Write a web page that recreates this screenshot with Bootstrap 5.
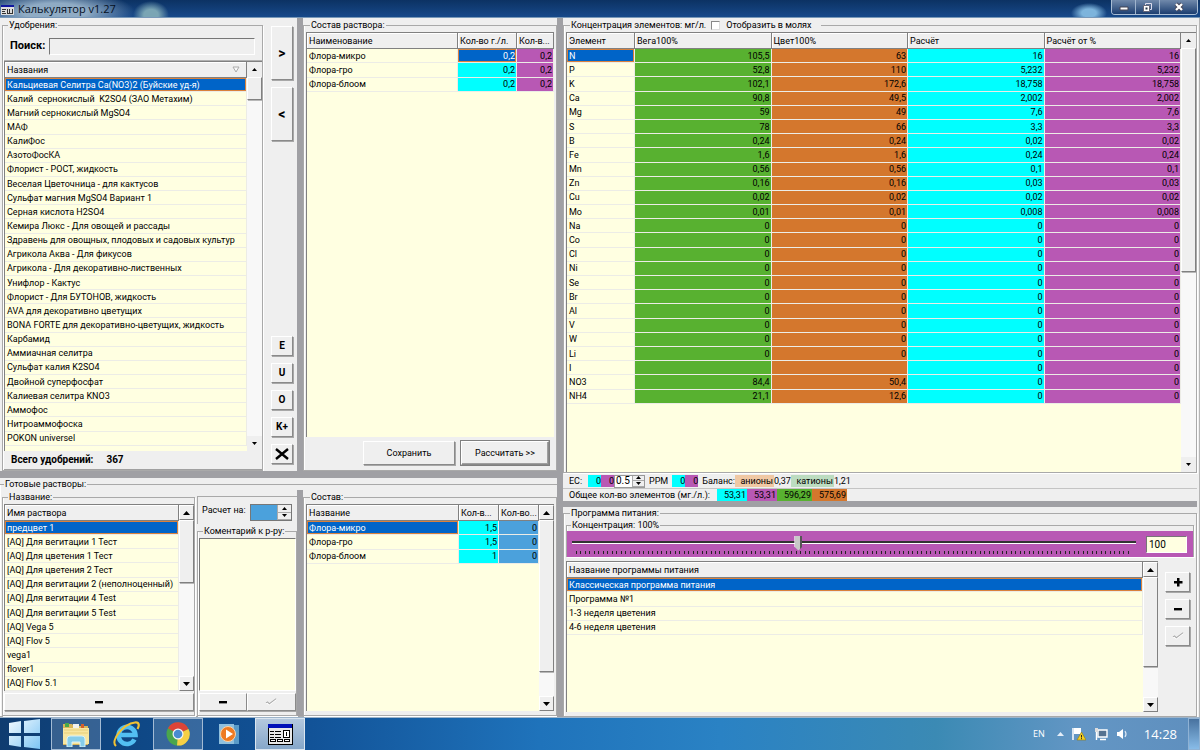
<!DOCTYPE html>
<html lang="ru">
<head>
<meta charset="utf-8">
<meta name="viewport" content="width=device-width, initial-scale=1">
<title>Калькулятор v1.27</title>
<link href="https://cdn.jsdelivr.net/npm/bootstrap@5.3.0/dist/css/bootstrap.min.css" rel="stylesheet">
<style>
  :root { --face:#efefef; --cream:#ffffe1; --cyan:#00ffff; --violet:#b858b4; --green:#58b130; --orange:#d4772d; --sky:#4ba1dc; --pick:#0064c8; --split:#a0a0a4; --edge:#808080; }
  body { background:var(--face); color:#000; font-family:Roboto,"Liberation Sans",sans-serif; font-size:9px; line-height:12px; }
  .titlebar { height:18px; padding-left:1px; font:11px/18px "Open Sans",sans-serif; border-bottom:1px solid #7898b8;
    background:radial-gradient(ellipse 18px 10px at 1089px 13px,#7db4dc 40%,transparent),radial-gradient(ellipse 18px 14px at 151px 15px,#7aa5b4 40%,transparent),radial-gradient(ellipse 80px 22px at 55px 12px,#8fabc4 40%,transparent),linear-gradient(#0c3263,#17498a); }
  .titlebar .caption { color:#05101f; }
  .winbtns { border:1px solid #a9bdd4; border-top:0; border-radius:0 0 4px 4px; height:15px; margin-right:2px; overflow:hidden; }
  .winbtns button { width:24px; height:14px; border:0; border-right:1px solid #9fb4cd; background:linear-gradient(#7089ab,#1c3e70); padding:0; line-height:0; }
  .winbtns button:last-child { width:37px; border-right:0; }

  .panes { display:grid; grid-template-columns:minmax(0,297fr) 6px minmax(0,254fr) 6px minmax(0,637fr); }
  .left-side { grid-column:1 / 4; display:grid; grid-template-rows:453fr 7px 239fr; }
  .row-top, .row-bottom { display:grid; grid-template-columns:minmax(0,297fr) 6px minmax(0,254fr); }
  .ready { display:grid; grid-template-columns:minmax(0,195fr) minmax(0,102fr); }
  .right-side { display:grid; grid-template-rows:483fr 6px 210fr; padding-right:2px; border-right:1px solid #b5b5b5; }
  .splitter { background:var(--split); }

  fieldset.gbox { border:1px solid #a9a9a9; box-shadow:inset 1px 0 #fff, 1px 1px #fff; display:flex; flex-direction:column; min-width:0; padding:0 2px; }
  fieldset.gbox > legend { float:none; width:auto; margin:0 0 0 4px; padding:0 1px; font-size:9px; line-height:14px; background:var(--face); }
  fieldset.tight > legend { line-height:12px; }
  fieldset.edge { margin-left:2px; padding:0 0 0 1px; }

  .frame { display:flex; flex:1 1 0; min-height:0; background:var(--cream); border:solid var(--edge); border-width:1px 0 0 1px; overflow:hidden; }
  .frame > .sheet { flex:1 1 0; min-width:0; }
  table.gridtab { width:100%; table-layout:fixed; border-collapse:separate; border-spacing:0; }
  .gridtab thead { height:16px; }
  .gridtab th { height:16px; padding:0 2px; font-weight:400; background:var(--face); border:solid var(--edge); border-width:0 1px 1px 0; box-shadow:inset 1px 1px #fff; white-space:nowrap; overflow:hidden; }
  .gridtab td { padding:0 1px 0 2px; line-height:12px; white-space:nowrap; overflow:hidden; border:solid #ecece6; border-width:0 1px 1px 0; }
  .gridtab td + td { text-align:right; }
  .gridtab td.picked { background:var(--pick); color:#fff; box-shadow:inset 0 0 0 1px #d9813c; }
  .rows26 { height:384px; } .rows25 { height:371px; } .rows12 { height:186px; } .rows4 { height:73px; } .rows3 { height:59px; }
  .w-37 { width:37px; } .w-40 { width:40px; } .w-59 { width:59px; } .w-68 { width:68px; }
  .c-cyan { background:var(--cyan); } .c-violet { background:var(--violet); } .c-green { background:var(--green); } .c-orange { background:var(--orange); } .c-sky { background:var(--sky); }
  .c-peach { background:#f0c8a4; } .c-mint { background:#bcdcc0; }

  .sbar { width:15px; flex:none; display:flex; flex-direction:column; background:#f8f8f8; }
  .sbar button { height:15px; flex:none; padding:0; border:0; background:var(--face); line-height:0; color:#000; }
  .sbar .groove { flex:1 1 0; }
  .sbar .grip, .sbar.classic button { background:var(--face); border:1px solid #fff; border-right-color:var(--edge); border-bottom-color:var(--edge); box-shadow:1px 1px #b8b8b8; }

  .raised { background:var(--face); border:1px solid #fff; border-right-color:#8a8a8a; border-bottom-color:#8a8a8a; box-shadow:1px 1px #a8a8a8; padding:0; color:#000; border-radius:0; font-size:9px; line-height:12px; }
  .raised.strong { font-weight:700; font-size:14px; }
  .raised.letter { font-weight:700; font-size:10px; height:20px; }
  .dlg { height:24px; flex:0 1 92px; }
  .default-btn { flex-basis:88px; box-shadow:inset -1px -1px #a0a0a0, 0 0 0 1px #808080; }
  .sidebtns { flex:none; width:22px; margin:8px 4px 7px 8px; gap:7px; }
  .sidebtns .tall { height:54px; }
  .search-row { height:29px; padding:0 7px 0 6px; border-bottom:1px solid #b0b0b0; }
  .cap { font-size:11px; font-weight:700; }
  .field { border:1px solid #fff; border-top-color:#777; border-left-color:#777; border-radius:0; padding:0 2px; background:var(--face); font-size:9px; min-width:0; }
  .search-row .field { height:17px; }
  .tallybar { height:19px; padding:0 7px; gap:13px; border-bottom:1px solid #a0a0a0; font-size:10px; font-weight:700; }
  .actions { height:33px; padding:4px 5px 0; gap:6px; }
  .spin { display:flex; border:1px solid #777; background:#fff; height:17px; }
  .spin input { border:0; padding:0 2px; min-width:0; }
  .spin .updown { display:flex; flex-direction:column; width:14px; }
  .spin .updown button { flex:1 1 0; min-height:0; padding:0; border:1px solid #aaa; border-width:0 0 1px 1px; background:var(--face); line-height:0; display:flex; align-items:center; justify-content:center; }
  .ecrow { height:15px; padding-left:6px; margin-top:1px; border-bottom:1px solid #c4c4c4; }
  .sumrow { height:12px; padding-left:6px; gap:7px; }
  .ecrow .num, .sumrow .num { text-align:right; height:12px; }
  .eclabel { width:19px; }
  .n13 { width:13px; } .n30 { width:30px; padding-right:1px; } .n35 { width:35px; padding-right:1px; } .n39 { width:39px; padding:0 1px; } .n43 { width:43px; padding:0 1px; }
  .ecrow .spin { width:31px; height:13px; border-color:#999; }
  .ecrow .spin input { width:17px; font-size:10px; padding:0 0 0 1px; }
  .ecrow .spin .updown { width:12px; }
  .checkline { gap:6px; background:var(--face); padding:0 8px 0 5px; }
  .checkline input { width:9px; height:9px; margin:0; appearance:none; border:1px solid #888; border-right-color:#ddd; border-bottom-color:#ddd; background:#fff; }
  .sliderbar { background:var(--violet); height:26px; padding:0 6px 0 5px; gap:10px; }
  .sliderbar .rail { padding-top:4px; }
  .sliderbar input[type=range] { appearance:none; display:block; width:100%; height:16px; margin:0; background:linear-gradient(#333,#333) 0 6px/100% 2px no-repeat,linear-gradient(#fff,#fff) 0 8px/100% 1px no-repeat; }
  .sliderbar input[type=range]::-webkit-slider-thumb { appearance:none; width:8px; height:15px; background:linear-gradient(90deg,#fff 1px,#c8c8c8 1px,#c8c8c8 6px,#555 6px); clip-path:polygon(0 0,100% 0,100% 75%,50% 100%,0 75%); }
  .ticks { height:3px; margin:0 4px; background:repeating-linear-gradient(90deg,#222 0,#222 1px,transparent 1px,transparent calc(100% / 124)); }
  .sliderbar .field { width:41px; height:17px; background:var(--cream); font-size:10px; }
  .progbtns { flex:none; width:25px; margin:11px 4px 0 7px; gap:7px; }
  .notes { resize:none; flex:1 1 0; min-height:0; background:var(--cream); border:1px solid #777; border-right-color:#fff; border-bottom-color:#fff; border-radius:0; }
  .wide-btn { height:18px; margin-top:2px; line-height:0; }
  .calc-row { height:28px; margin:6px 0 0 2px; gap:4px; padding:7px 3px 0 4px; border:solid #a9a9a9; border-width:1px 0 0 1px; }
  .calc-row label { line-height:13px; }
  .calc-row .spin input { width:26px; background:var(--sky); }

  .taskbar { height:33px; border-top:1px solid #9db4ca; color:#fff; background:linear-gradient(90deg,#0f3c70 0,#0f4886 12%,#125398 26%,#1f73bb 45%,#2a82c4 60%,#3b8ab4 78%,#6396c4 90%,#5f8fbe 100%); }
  .taskbar > button { width:50px; height:32px; padding:0; border:1px solid transparent; background:none; line-height:0; margin-right:1px; }
  .taskbar > button.open { background:#ffffff2a; border-color:#a3bbd4; }
  .taskbar > button.active { background:linear-gradient(#b4c8de,#86a7c9); border-color:#dbe6f0; }
  .tray { gap:8px; font:9px/12px "Open Sans",sans-serif; }
  .tray .clock { font-size:13px; margin:0 3px 0 8px; }
  .peek { width:12px; height:32px; border:1px solid #8fb2d4; background:linear-gradient(#48729f,#88bce8); padding:0; }
</style>
</head>
<body>
<svg width="0" height="0" class="d-none">
  <symbol id="up" viewBox="0 0 7 4"><path d="M0 4 3.5 0 7 4z"/></symbol>
  <symbol id="down" viewBox="0 0 7 4"><path d="M0 0h7L3.5 4z"/></symbol>
  <symbol id="minus" viewBox="0 0 10 10"><path d="M1 4h8v2.4H1z"/></symbol>
  <symbol id="tick" viewBox="0 0 14 9"><path d="M1 6l2-1 2 2 8-6" fill="none" stroke="#fff" stroke-width="2.4"/><path d="M1 5.500l2-1 2 2 8-6" fill="none" stroke="#aaa" stroke-width="1.200"/></symbol>
</svg>
<div class="d-flex flex-column min-vh-100">
  <header class="titlebar d-flex align-items-start">
    <svg width="13" height="11" viewBox="0 0 13 11" class="mt-1 me-1" shape-rendering="crispEdges"><path fill="#ddd" d="M0 1h13v10H0z"/><path fill="#1118a0" d="M0 1h13v2H0z"/><path stroke="#333" d="M1 5.500h4M1 7.500h3M1 9.500h4M6.500 5v5M8.500 5v4M11.500 5v5M7 9.500h4"/></svg>
    <span class="caption">Калькулятор v1.27</span>
    <div class="winbtns d-flex ms-auto">
      <button aria-label="Свернуть"><svg width="10" height="10"><path d="M1 5h8v3H1z" fill="#fff" stroke="#445"/></svg></button>
      <button aria-label="Развернуть"><svg width="11" height="11"><path d="M3.500 1.500h6v6h-6z" fill="none" stroke="#dde"/><path d="M1.500 3.500h6v6h-6z" fill="#fff" stroke="#667"/><path d="M3.500 5.500h2v2h-2z" fill="#234"/></svg></button>
      <button aria-label="Закрыть"><svg width="10" height="10"><path d="M2 2l6 6M8 2l-6 6" stroke="#445" stroke-width="4"/><path d="M2 2l6 6M8 2l-6 6" stroke="#fff" stroke-width="2.300"/></svg></button>
    </div>
  </header>

  <main class="panes flex-fill">
    <div class="left-side">
      <div class="row-top">
        <section class="d-flex">
          <fieldset class="gbox edge flex-fill">
            <legend>Удобрения:</legend>
            <div class="search-row d-flex align-items-center gap-1">
              <label class="cap" for="find">Поиск:</label><input id="find" type="text" class="field flex-fill">
            </div>
            <div class="frame">
              <div class="sheet">
                <table class="gridtab rows26">
                  <thead><tr><th><span class="d-flex justify-content-between align-items-center">Названия<svg width="8" height="7" class="me-1"><path d="M1 1h6L4 6z" fill="#f8f8f8" stroke="#aaa"/></svg></span></th></tr></thead>
                  <tbody>
                    <tr><td class="picked">Кальциевая Селитра Ca(NO3)2 (Буйские уд-я)</td></tr>
                    <tr><td>Калий &nbsp;сернокислый &nbsp;K2SO4 (ЗАО Метахим)</td></tr>
                    <tr><td>Магний сернокислый MgSO4</td></tr>
                    <tr><td>МАФ</td></tr>
                    <tr><td>КалиФос</td></tr>
                    <tr><td>АзотоФосКА</td></tr>
                    <tr><td>Флорист - РОСТ, жидкость</td></tr>
                    <tr><td>Веселая Цветочница - для кактусов</td></tr>
                    <tr><td>Сульфат магния MgSO4 Вариант 1</td></tr>
                    <tr><td>Серная кислота H2SO4</td></tr>
                    <tr><td>Кемира Люкс - Для овощей и рассады</td></tr>
                    <tr><td>Здравень для овощных, плодовых и садовых культур</td></tr>
                    <tr><td>Агрикола Аква - Для фикусов</td></tr>
                    <tr><td>Агрикола - Для декоративно-лиственных</td></tr>
                    <tr><td>Унифлор - Кактус</td></tr>
                    <tr><td>Флорист - Для БУТОНОВ, жидкость</td></tr>
                    <tr><td>AVA для декоративно цветущих</td></tr>
                    <tr><td>BONA FORTE для декоративно-цветущих, жидкость</td></tr>
                    <tr><td>Карбамид</td></tr>
                    <tr><td>Аммиачная селитра</td></tr>
                    <tr><td>Сульфат калия K2SO4</td></tr>
                    <tr><td>Двойной суперфосфат</td></tr>
                    <tr><td>Калиевая селитра KNO3</td></tr>
                    <tr><td>Аммофос</td></tr>
                    <tr><td>Нитроаммофоска</td></tr>
                    <tr><td>POKON universel</td></tr>
                  </tbody>
                </table>
              </div>
              <div class="sbar"><button aria-label="Вверх"><svg width="5" height="3"><use href="#up"/></svg></button><div class="grip" style="height:6%"></div><div class="groove"></div><button aria-label="Вниз"><svg width="5" height="3"><use href="#down"/></svg></button></div>
            </div>
            <div class="tallybar d-flex align-items-center"><span>Всего удобрений:</span><span>367</span></div>
          </fieldset>
          <div class="sidebtns d-flex flex-column">
            <button class="raised strong tall">&gt;</button>
            <button class="raised strong tall">&lt;</button>
            <button class="raised letter mt-auto">E</button>
            <button class="raised letter">U</button>
            <button class="raised letter">O</button>
            <button class="raised letter">K+</button>
            <button class="raised letter" aria-label="Удалить"><svg width="14" height="12"><path d="M1 1l12 10M13 1L1 11" stroke="#000" stroke-width="2.400"/></svg></button>
          </div>
        </section>
        <div class="splitter"></div>
        <fieldset class="gbox">
          <legend>Состав раствора:</legend>
          <div class="frame">
            <div class="sheet">
              <table class="gridtab rows3">
                <colgroup><col><col class="w-59"><col class="w-37"></colgroup>
                <thead><tr><th>Наименование</th><th>Кол-во г./л.</th><th>Кол-в...</th></tr></thead>
                <tbody>
                  <tr><td>Флора-микро</td><td class="picked">0,2</td><td class="c-violet">0,2</td></tr>
                  <tr><td>Флора-гро</td><td class="c-cyan">0,2</td><td class="c-violet">0,2</td></tr>
                  <tr><td>Флора-блоом</td><td class="c-cyan">0,2</td><td class="c-violet">0,2</td></tr>
                </tbody>
              </table>
            </div>
          </div>
          <div class="actions d-flex justify-content-end">
            <button class="raised dlg">Сохранить</button>
            <button class="raised dlg default-btn">Рассчитать &gt;&gt;</button>
          </div>
        </fieldset>
      </div>
      <div class="splitter"></div>
      <fieldset class="gbox tight border-start-0 border-end-0 p-0">
        <legend>Готовые растворы:</legend>
        <div class="row-bottom flex-fill">
          <div class="ready">
            <fieldset class="gbox edge">
              <legend>Название:</legend>
              <div class="frame">
                <div class="sheet">
                  <table class="gridtab rows12">
                    <thead><tr><th>Имя раствора</th></tr></thead>
                    <tbody>
                      <tr><td class="picked">предцвет 1</td></tr>
                      <tr><td>[AQ] Для вегитации 1 Тест</td></tr>
                      <tr><td>[AQ] Для цветения 1 Тест</td></tr>
                      <tr><td>[AQ] Для цветения 2 Тест</td></tr>
                      <tr><td>[AQ] Для вегитации 2 (неполноценный)</td></tr>
                      <tr><td>[AQ] Для вегитации 4 Test</td></tr>
                      <tr><td>[AQ] Для вегитации 5 Test</td></tr>
                      <tr><td>[AQ] Vega 5</td></tr>
                      <tr><td>[AQ] Flov 5</td></tr>
                      <tr><td>vega1</td></tr>
                      <tr><td>flover1</td></tr>
                      <tr><td>[AQ] Flov 5.1</td></tr>
                    </tbody>
                  </table>
                </div>
                <div class="sbar classic"><button aria-label="Вверх"><svg width="7" height="4"><use href="#up"/></svg></button><div class="grip" style="height:34%"></div><div class="groove"></div><button aria-label="Вниз"><svg width="7" height="4"><use href="#down"/></svg></button></div>
              </div>
              <button class="raised wide-btn mb-1" aria-label="Удалить раствор"><svg width="10" height="10"><use href="#minus"/></svg></button>
            </fieldset>
            <div class="d-flex flex-column">
              <div class="calc-row d-flex align-items-start">
                <label for="vol" class="text-nowrap">Расчет на:</label>
                <span class="spin"><input id="vol" type="text"><span class="updown"><button aria-label="Больше"><svg width="5" height="3"><use href="#up"/></svg></button><button aria-label="Меньше"><svg width="5" height="3"><use href="#down"/></svg></button></span></span>
              </div>
              <fieldset class="gbox edge flex-fill">
                <legend class="text-nowrap">Коментарий к р-ру:</legend>
                <textarea class="notes" aria-label="Коментарий к р-ру"></textarea>
                <div class="d-flex mb-1">
                  <button class="raised wide-btn flex-fill" aria-label="Удалить коментарий"><svg width="10" height="10"><use href="#minus"/></svg></button>
                  <button class="raised wide-btn flex-fill" aria-label="Применить"><svg width="12" height="8"><use href="#tick"/></svg></button>
                </div>
              </fieldset>
            </div>
          </div>
          <div class="splitter"></div>
          <fieldset class="gbox">
            <legend>Состав:</legend>
            <div class="frame mb-1">
              <div class="sheet">
                <table class="gridtab rows3">
                  <colgroup><col><col class="w-40"><col class="w-40"></colgroup>
                  <thead><tr><th>Название</th><th>Кол-в...</th><th>Кол-во...</th></tr></thead>
                  <tbody>
                    <tr><td class="picked">Флора-микро</td><td class="c-cyan">1,5</td><td class="c-sky">0</td></tr>
                    <tr><td>Флора-гро</td><td class="c-cyan">1,5</td><td class="c-sky">0</td></tr>
                    <tr><td>Флора-блоом</td><td class="c-cyan">1</td><td class="c-sky">0</td></tr>
                  </tbody>
                </table>
              </div>
              <div class="sbar classic"><button aria-label="Вверх"><svg width="7" height="4"><use href="#up"/></svg></button><div class="grip" style="height:74%"></div><div class="groove"></div><button aria-label="Вниз"><svg width="7" height="4"><use href="#down"/></svg></button></div>
            </div>
          </fieldset>
        </div>
      </fieldset>
    </div>

    <div class="splitter"></div>

    <div class="right-side">
      <section class="d-flex flex-column">
        <fieldset class="gbox flex-fill pe-0">
          <legend class="d-flex"><span>Концентрация элементов: мг/л.</span>
            <span class="checkline d-inline-flex align-items-center"><input type="checkbox" id="mol"><label for="mol">Отобразить в молях</label></span></legend>
          <div class="frame">
            <div class="sheet">
              <table class="gridtab rows25">
                <colgroup><col class="w-68"><col><col><col><col></colgroup>
                <thead><tr><th>Элемент</th><th>Вега100%</th><th>Цвет100%</th><th>Расчёт</th><th>Расчёт от %</th></tr></thead>
                <tbody>
                  <tr><td class="picked">N</td><td class="c-green">105,5</td><td class="c-orange">63</td><td class="c-cyan">16</td><td class="c-violet">16</td></tr>
                  <tr><td>P</td><td class="c-green">52,8</td><td class="c-orange">110</td><td class="c-cyan">5,232</td><td class="c-violet">5,232</td></tr>
                  <tr><td>K</td><td class="c-green">102,1</td><td class="c-orange">172,6</td><td class="c-cyan">18,758</td><td class="c-violet">18,758</td></tr>
                  <tr><td>Ca</td><td class="c-green">90,8</td><td class="c-orange">49,5</td><td class="c-cyan">2,002</td><td class="c-violet">2,002</td></tr>
                  <tr><td>Mg</td><td class="c-green">59</td><td class="c-orange">49</td><td class="c-cyan">7,6</td><td class="c-violet">7,6</td></tr>
                  <tr><td>S</td><td class="c-green">78</td><td class="c-orange">66</td><td class="c-cyan">3,3</td><td class="c-violet">3,3</td></tr>
                  <tr><td>B</td><td class="c-green">0,24</td><td class="c-orange">0,24</td><td class="c-cyan">0,02</td><td class="c-violet">0,02</td></tr>
                  <tr><td>Fe</td><td class="c-green">1,6</td><td class="c-orange">1,6</td><td class="c-cyan">0,24</td><td class="c-violet">0,24</td></tr>
                  <tr><td>Mn</td><td class="c-green">0,56</td><td class="c-orange">0,56</td><td class="c-cyan">0,1</td><td class="c-violet">0,1</td></tr>
                  <tr><td>Zn</td><td class="c-green">0,16</td><td class="c-orange">0,16</td><td class="c-cyan">0,03</td><td class="c-violet">0,03</td></tr>
                  <tr><td>Cu</td><td class="c-green">0,02</td><td class="c-orange">0,02</td><td class="c-cyan">0,02</td><td class="c-violet">0,02</td></tr>
                  <tr><td>Mo</td><td class="c-green">0,01</td><td class="c-orange">0,01</td><td class="c-cyan">0,008</td><td class="c-violet">0,008</td></tr>
                  <tr><td>Na</td><td class="c-green">0</td><td class="c-orange">0</td><td class="c-cyan">0</td><td class="c-violet">0</td></tr>
                  <tr><td>Co</td><td class="c-green">0</td><td class="c-orange">0</td><td class="c-cyan">0</td><td class="c-violet">0</td></tr>
                  <tr><td>Cl</td><td class="c-green">0</td><td class="c-orange">0</td><td class="c-cyan">0</td><td class="c-violet">0</td></tr>
                  <tr><td>Ni</td><td class="c-green">0</td><td class="c-orange">0</td><td class="c-cyan">0</td><td class="c-violet">0</td></tr>
                  <tr><td>Se</td><td class="c-green">0</td><td class="c-orange">0</td><td class="c-cyan">0</td><td class="c-violet">0</td></tr>
                  <tr><td>Br</td><td class="c-green">0</td><td class="c-orange">0</td><td class="c-cyan">0</td><td class="c-violet">0</td></tr>
                  <tr><td>Al</td><td class="c-green">0</td><td class="c-orange">0</td><td class="c-cyan">0</td><td class="c-violet">0</td></tr>
                  <tr><td>V</td><td class="c-green">0</td><td class="c-orange">0</td><td class="c-cyan">0</td><td class="c-violet">0</td></tr>
                  <tr><td>W</td><td class="c-green">0</td><td class="c-orange">0</td><td class="c-cyan">0</td><td class="c-violet">0</td></tr>
                  <tr><td>Li</td><td class="c-green">0</td><td class="c-orange">0</td><td class="c-cyan">0</td><td class="c-violet">0</td></tr>
                  <tr><td>I</td><td class="c-green"></td><td class="c-orange"></td><td class="c-cyan">0</td><td class="c-violet">0</td></tr>
                  <tr><td>NO3</td><td class="c-green">84,4</td><td class="c-orange">50,4</td><td class="c-cyan">0</td><td class="c-violet">0</td></tr>
                  <tr><td>NH4</td><td class="c-green">21,1</td><td class="c-orange">12,6</td><td class="c-cyan">0</td><td class="c-violet">0</td></tr>
                </tbody>
              </table>
            </div>
            <div class="sbar"><button aria-label="Вверх"><svg width="5" height="3"><use href="#up"/></svg></button><div class="grip" style="height:51%"></div><div class="groove"></div><button aria-label="Вниз"><svg width="5" height="3"><use href="#down"/></svg></button></div>
          </div>
        </fieldset>
        <div class="ecrow d-flex align-items-center">
          <label for="ppmk" class="eclabel">EC:</label><span class="num n13 c-cyan">0</span><span class="num n13 c-violet">0</span>
          <span class="spin"><input id="ppmk" type="text" value="0.5"><span class="updown"><button aria-label="Больше"><svg width="5" height="3"><use href="#up"/></svg></button><button aria-label="Меньше"><svg width="5" height="3"><use href="#down"/></svg></button></span></span>
          <span class="ms-1 me-1">PPM</span><span class="num n13 c-cyan">0</span><span class="num n13 c-violet">0</span>
          <span class="ms-1">Баланс:</span><span class="num n39 c-peach">анионы</span><span>0,37</span><span class="num n43 c-mint">катионы</span><span>1,21</span>
        </div>
        <div class="sumrow d-flex align-items-center">
          <span>Общее кол-во элементов (мг./л.):</span><span class="d-flex"><span class="num n30 c-cyan">53,31</span><span class="num n30 c-violet">53,31</span><span class="num n35 c-green">596,29</span><span class="num n35 c-orange">575,69</span></span>
        </div>
      </section>
      <div class="splitter"></div>
      <fieldset class="gbox tight">
        <legend>Программа питания:</legend>
        <fieldset class="gbox tight p-0 border-bottom-0">
          <legend><label for="conc">Концентрация: 100%</label></legend>
          <div class="sliderbar d-flex align-items-center">
            <div class="rail flex-fill align-self-start"><input type="range" id="conc" min="0" max="250" value="100"><div class="ticks"></div></div>
            <input type="text" class="field" value="100" aria-label="Концентрация, %">
          </div>
        </fieldset>
        <div class="d-flex flex-fill pt-1">
          <div class="frame mb-1">
            <div class="sheet">
              <table class="gridtab rows4">
                <thead><tr><th>Название программы питания</th></tr></thead>
                <tbody>
                  <tr><td class="picked">Классическая программа питания</td></tr>
                  <tr><td>Программа №1</td></tr>
                  <tr><td>1-3 неделя цветения</td></tr>
                  <tr><td>4-6 неделя цветения</td></tr>
                </tbody>
              </table>
            </div>
            <div class="sbar classic"><button aria-label="Вверх"><svg width="7" height="4"><use href="#up"/></svg></button><div class="grip" style="height:60%"></div><div class="groove"></div><button aria-label="Вниз"><svg width="7" height="4"><use href="#down"/></svg></button></div>
          </div>
          <div class="progbtns d-flex flex-column">
            <button class="raised letter" aria-label="Добавить"><svg width="10" height="10"><path d="M1 4h3V1h2.500v3h3v2.400h-3v3H4v-3H1z"/></svg></button>
            <button class="raised letter" aria-label="Убрать"><svg width="10" height="10"><use href="#minus"/></svg></button>
            <button class="raised letter" aria-label="Применить"><svg width="12" height="8"><use href="#tick"/></svg></button>
          </div>
        </div>
      </fieldset>
    </div>
  </main>

  <footer class="taskbar d-flex align-items-start">
    <button aria-label="Пуск"><svg width="34" height="30" viewBox="0 0 34 30"><defs><linearGradient id="w" x1="0" y1="0" x2="1" y2="1"><stop offset="0" stop-color="#f4fbff"/><stop offset="1" stop-color="#7cc4f4"/></linearGradient></defs><path fill="url(#w)" d="M1 4l12-2v12H1zM16 2l16-2v14H16zM1 17h12v11L1 26zM16 17h16v13l-16-2z"/></svg></button>
    <button class="open" aria-label="Проводник"><svg width="28" height="26" viewBox="0 0 28 26"><path d="M1 3h9l2 2h14v19H1z" fill="#d9b65a"/><path d="M3 2h4v4H3z" fill="#4aa848"/><path d="M11 3h6v4h-6z" fill="#f2f2ee"/><path d="M19 3h3v4h-3z" fill="#d35f2c"/><path d="M1 7h26v16H1z" fill="#f7e6a0"/><path d="M2 9h24M2 12h24" stroke="#e7cd78"/><path d="M5 26V18q0-3 3-3h12q3 0 3 3v8h-5v-5h-8v5z" fill="#86cdea" stroke="#d9f2fb"/></svg></button>
    <button aria-label="Internet Explorer"><svg width="28" height="27" viewBox="0 0 28 27"><path d="M21.500 18.500A8.500 8.500 0 1 1 22.500 14H7" fill="none" stroke="#53bff2" stroke-width="4.600"/><path d="M3 25C-3 20 10 3 22 1.500c5-.5 4 4 2.500 6.500" fill="none" stroke="#f1c232" stroke-width="2.200"/></svg></button>
    <button class="open" aria-label="Chrome"><svg width="24" height="24" viewBox="0 0 24 24"><circle cx="12" cy="12" r="11.500" fill="#4aa64c"/><path d="M12 12 2 6.200A11.500 11.500 0 0 1 22.500 7z" fill="#dc4437"/><path d="M12 12l10.500-5A11.500 11.500 0 0 1 11 23.500z" fill="#f6cf45"/><circle cx="12" cy="12" r="5.500" fill="#f5f5f5"/><circle cx="12" cy="12" r="4.300" fill="#4a8bd0"/></svg></button>
    <button aria-label="Проигрыватель"><svg width="24" height="24" viewBox="0 0 24 24"><path d="M2 2h15v20H2z" fill="#8fc0de"/><path d="M17 3h5v19h-5z" fill="#5a9bc8"/><circle cx="11" cy="12" r="7.500" fill="#ee7a22" stroke="#fbd3a8"/><path d="M9 7.500l7 4.500-7 4.500z" fill="#fff"/></svg></button>
    <button class="active" aria-label="Калькулятор v1.27"><svg width="26" height="22" viewBox="0 0 26 22" shape-rendering="crispEdges"><path d="M1 1h24v20H1z" fill="#e8e8e8" stroke="#000"/><path d="M1 1h24v4H1z" fill="#0010b8"/><path d="M3 8h4M3 11h4M3 14h4M8 8h6M8 11h6M8 14h6" stroke="#000" stroke-width="1"/><path d="M16.500 7.500h6v7h-6zM19.500 9v4M3.500 16.500h5v2h-5zM10.500 16.500h5v2h-5zM17.500 16.500h5v2h-5z" fill="#fff" stroke="#000"/></svg></button>
    <div class="tray d-flex align-items-center ms-auto align-self-center">
      <span class="me-1">EN</span>
      <svg width="7" height="4" fill="#e4eef8"><use href="#up"/></svg>
      <svg width="14" height="14" viewBox="0 0 14 14"><path d="M1 1v12" stroke="#fff" stroke-width="1.500"/><path d="M2 1h7v6H2z" fill="#fff"/><path d="M9.500 5l4.500 8H5z" fill="#f3cf22" stroke="#8f7a10" stroke-width=".6"/><path d="M9.500 8v2.500M9.500 11.200v1" stroke="#222"/></svg>
      <svg width="14" height="14" viewBox="0 0 14 14"><path d="M4 3h9v7H4z" fill="#557290" stroke="#fff" stroke-width="1.400"/><path d="M6 12.500h6M2.500 5v8" stroke="#fff" stroke-width="1.400"/><path d="M1 1h3v4H1z" fill="#ddd"/></svg>
      <svg width="12" height="12" viewBox="0 0 12 12"><path d="M1 4h2l4-3v10L3 8H1z" fill="#fff"/><path d="M9 3q2 3 0 6" fill="none" stroke="#dde8f4" stroke-width="1.200"/></svg>
      <span class="clock">14:28</span>
      <button class="peek" aria-label="Рабочий стол"></button>
    </div>
  </footer>
</div>
</body>
</html>
